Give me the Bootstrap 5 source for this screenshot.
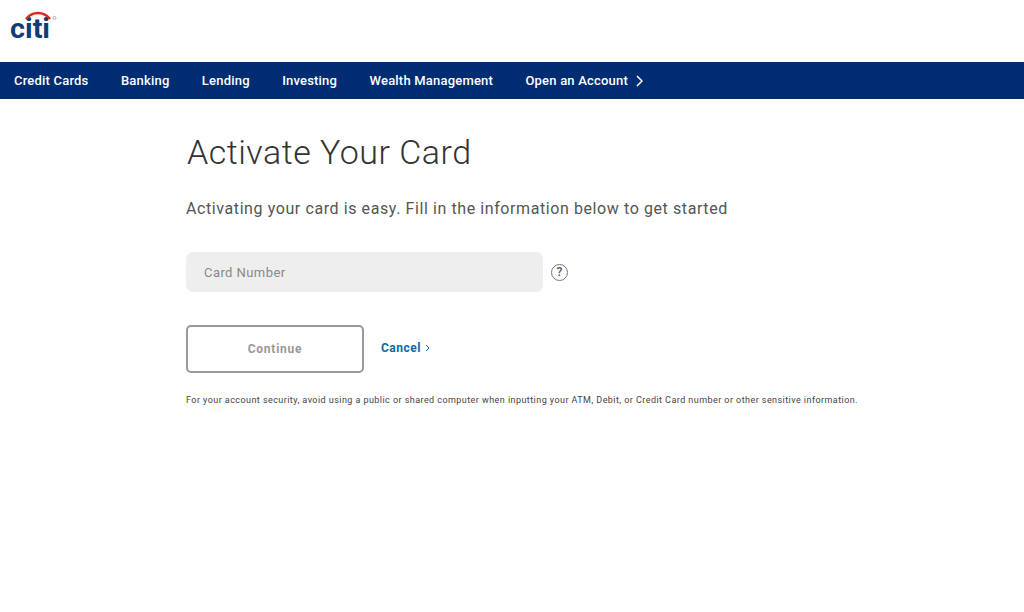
<!DOCTYPE html>
<html lang="en"><head><meta charset="utf-8"><title>Activate Your Card</title>
<link href="https://cdn.jsdelivr.net/npm/bootstrap@5.3.0/dist/css/bootstrap.min.css" rel="stylesheet">
<style>
body{font-family:Roboto,sans-serif;background:#fff;color:#333;height:612px;overflow:hidden}
.brandbar{height:62px;padding:10px 0 0 10px}
.brandbar svg{display:block}
.mainnav{height:37px;background:#002d72;gap:32.4px;padding-left:14px}
.mainnav a{color:#fff;font:500 13px Roboto,sans-serif;letter-spacing:.2px;text-decoration:none}
.pagewrap{padding:33px 0 0 186px}
.pagetitle{font:300 34px Roboto,sans-serif;letter-spacing:.5px;color:#333;margin:0 0 27px 1px}
.subline{font:400 16px Roboto,sans-serif;letter-spacing:.59px;color:#555;margin:0 0 34px}
.cardfield{width:357px;height:40px;background:#eee;border:0;border-radius:7px;padding:0 18px;font:400 13px Roboto,sans-serif;letter-spacing:.43px}
.cardfield::placeholder{color:#888;opacity:1}
.helpicon{width:17px;height:17px;border:1px solid #777;border-radius:50%;font:500 12px/15px Roboto,sans-serif;text-align:center;color:#555;margin-left:8px}
.actions{margin-top:33px}
.btncontinue{width:178px;height:48px;border:2px solid #999;border-radius:5px;background:#fff;color:#999;font:700 12px Roboto,sans-serif;letter-spacing:.75px}
.btncontinue:disabled{border-color:#999;color:#999;background:#fff;opacity:1}
.cancellink{color:#056dae;font:700 12px Roboto,sans-serif;letter-spacing:.5px;text-decoration:none;margin-left:17px;margin-top:-2px}
.notice{font:400 9px Roboto,sans-serif;letter-spacing:.44px;color:#444;margin:22px 0 0}
</style></head><body>
<header class="brandbar">
<svg width="50" height="38" viewBox="0 0 50 38" role="img" aria-label="citi">
<text x="0" y="28" font-family="Roboto,sans-serif" font-size="28" font-weight="700" fill="#0f3d78" textLength="40" lengthAdjust="spacingAndGlyphs">citi</text>
<path d="M16 9C22 1 34 1 40 9" fill="none" stroke="#e2231a" stroke-width="2.5"/>
<circle cx="44.500" cy="8" r="1.500" fill="none" stroke="#99a" stroke-width=".8"/></svg>
</header>
<nav class="mainnav d-flex align-items-center">
<a href="#">Credit Cards</a><a href="#">Banking</a><a href="#">Lending</a><a href="#">Investing</a><a href="#">Wealth Management</a>
<a href="#" class="d-flex align-items-center gap-2">Open an Account <svg width="7" height="12" viewBox="0 0 7 12"><path d="M1 1l5 5-5 5" fill="none" stroke="#fff" stroke-width="1.5"/></svg></a>
</nav>
<main class="pagewrap">
<h1 class="pagetitle">Activate Your Card</h1>
<p class="subline">Activating your card is easy. Fill in the information below to get started</p>
<div class="d-flex align-items-center"><input class="cardfield" placeholder="Card Number" aria-label="Card Number"><span class="helpicon">?</span></div>
<div class="actions d-flex align-items-center"><button class="btncontinue" disabled>Continue</button><a class="cancellink d-flex align-items-center gap-1" href="#">Cancel <svg width="5" height="8" viewBox="0 0 5 8"><path d="M1 1l3 3-3 3" fill="none" stroke="#056dae"/></svg></a></div>
<p class="notice">For your account security, avoid using a public or shared computer when inputting your ATM, Debit, or Credit Card number or other sensitive information.</p>
</main>
<script src="https://cdn.jsdelivr.net/npm/bootstrap@5.3.0/dist/js/bootstrap.bundle.min.js"></script>
</body></html>
